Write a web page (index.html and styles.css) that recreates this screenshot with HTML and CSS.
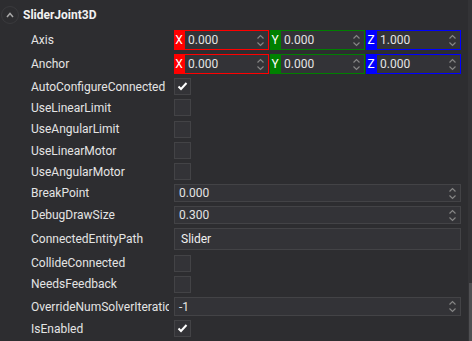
FILE: index.html
```html
<!DOCTYPE html>
<html lang="en">
  <head>
    <meta charset="UTF-8" />
    <title>SliderJoint3D</title>
    <link rel="stylesheet" href="styles.css">
  </head>
  <body>
    <div class="panel">
      <div class="content">
        <div class="header">
          <span class="collapse">
            <svg width="8" height="6" viewBox="0 0 8 6"><polyline points="1,5 4,1.5 7,5" fill="none" stroke="#a8a8a8" stroke-width="1.5"/></svg>
          </span>
          <span class="title">SliderJoint3D</span>
        </div>

        <div class="props">
          <div class="row">
            <div class="label">Axis</div>
            <div class="vector">
              <div class="axis x"><span class="tag">X</span><span class="num">0.000<i class="spin"></i></span></div>
              <div class="axis y"><span class="tag">Y</span><span class="num">0.000<i class="spin"></i></span></div>
              <div class="axis z"><span class="tag">Z</span><span class="num">1.000<i class="spin"></i></span></div>
            </div>
          </div>
          <div class="row">
            <div class="label">Anchor</div>
            <div class="vector">
              <div class="axis x"><span class="tag">X</span><span class="num">0.000<i class="spin"></i></span></div>
              <div class="axis y"><span class="tag">Y</span><span class="num">0.000<i class="spin"></i></span></div>
              <div class="axis z"><span class="tag">Z</span><span class="num">0.000<i class="spin"></i></span></div>
            </div>
          </div>
          <div class="row check-row">
            <div class="label">AutoConfigureConnected</div>
            <div><span class="checkbox checked"></span></div>
          </div>
          <div class="row check-row">
            <div class="label">UseLinearLimit</div>
            <div><span class="checkbox"></span></div>
          </div>
          <div class="row check-row">
            <div class="label">UseAngularLimit</div>
            <div><span class="checkbox"></span></div>
          </div>
          <div class="row check-row">
            <div class="label">UseLinearMotor</div>
            <div><span class="checkbox"></span></div>
          </div>
          <div class="row check-row">
            <div class="label">UseAngularMotor</div>
            <div><span class="checkbox"></span></div>
          </div>
          <div class="row">
            <div class="label">BreakPoint</div>
            <div class="field number">0.000<i class="spin"></i></div>
          </div>
          <div class="row">
            <div class="label">DebugDrawSize</div>
            <div class="field number">0.300<i class="spin"></i></div>
          </div>
          <div class="row">
            <div class="label">ConnectedEntityPath</div>
            <div class="field text">Slider</div>
          </div>
          <div class="row check-row">
            <div class="label">CollideConnected</div>
            <div><span class="checkbox"></span></div>
          </div>
          <div class="row check-row">
            <div class="label">NeedsFeedback</div>
            <div><span class="checkbox"></span></div>
          </div>
          <div class="row">
            <div class="label">OverrideNumSolverIterations</div>
            <div class="field number tall">-1<i class="spin"></i></div>
          </div>
          <div class="row check-row">
            <div class="label">IsEnabled</div>
            <div><span class="checkbox checked"></span></div>
          </div>
        </div>
      </div>
      <div class="scrollbar"><div class="thumb"></div></div>
    </div>
  </body>
</html>
```

FILE: styles.css
```css
body {
  margin: 0;
  background-color: #2d2d30;
  font-family: Roboto, "Liberation Sans", sans-serif;
  font-size: 12px;
  color: #e4e4e4;
  overflow: hidden;
}
.panel {
  display: flex;
  height: 341px;
}
.content {
  flex: 1;
}
.header {
  height: 28px;
  display: flex;
  align-items: center;
  padding-top: 2px;
  box-sizing: border-box;
}
.collapse {
  width: 18px;
  height: 18px;
  margin-left: 1px;
  border: 1px solid #3a3a3d;
  border-radius: 50%;
  display: flex;
  justify-content: center;
  align-items: center;
  box-sizing: border-box;
}
.collapse svg {
  margin-top: -1px;
}
.title {
  margin-left: 4px;
  font-weight: bold;
  color: #f2f2f2;
}
.row {
  display: grid;
  grid-template-columns: 174px 287px;
  align-items: center;
  padding: 2px 0;
}
.check-row {
  height: 21.3px;
  padding: 0;
}
.label {
  margin-right: 5px;
  padding-left: 31px;
  white-space: nowrap;
  overflow: hidden;
}
.vector {
  display: flex;
  gap: 1px;
  height: 20px;
}
.axis {
  flex: 1;
  display: flex;
}
.tag {
  width: 10px;
  display: flex;
  justify-content: center;
  align-items: center;
  color: #ffffff;
  font-size: 12px;
}
.num {
  flex: 1;
  position: relative;
  background: #333337;
  border: 1px solid;
  padding-left: 3px;
  display: flex;
  align-items: center;
}
.x .tag { background: #ff0000; }
.x .num { border-color: #ff0000; }
.y .tag { background: #008000; }
.y .num { border-color: #008000; }
.z .tag { background: #0000ff; }
.z .num { border-color: #0000ff; }
.spin {
  position: absolute;
  right: 4px;
  top: 50%;
  width: 7px;
  height: 13px;
  margin-top: -6.5px;
  background:
    url("data:image/svg+xml,%3Csvg xmlns='http://www.w3.org/2000/svg' width='7' height='13'%3E%3Cpolyline points='0.5,4.5 3.5,1.5 6.5,4.5' fill='none' stroke='%23858585' stroke-width='1.2'/%3E%3Cpolyline points='0.5,8.5 3.5,11.5 6.5,8.5' fill='none' stroke='%23858585' stroke-width='1.2'/%3E%3C/svg%3E") no-repeat;
}
.field {
  position: relative;
  background: #333337;
  border: 1px solid #434346;
  display: flex;
  align-items: center;
  box-sizing: border-box;
}
.number {
  height: 18px;
  padding-left: 4px;
}
.number.tall {
  height: 19px;
}
.text {
  height: 22px;
  padding-left: 6px;
  color: #f0f0f0;
}
.checkbox {
  display: block;
  width: 17px;
  height: 17px;
  box-sizing: border-box;
  background: #333337;
  border: 1px solid #434346;
}
.checkbox.checked {
  background:
    url("data:image/svg+xml,%3Csvg xmlns='http://www.w3.org/2000/svg' width='15' height='15'%3E%3Cpolyline points='3.5,7.5 6,10 11.5,4' fill='none' stroke='%23ffffff' stroke-width='2'/%3E%3C/svg%3E") no-repeat, #333337;
}
.scrollbar {
  width: 4px;
  background: #333336;
  display: flex;
  flex-direction: column;
  justify-content: flex-end;
}
.thumb {
  height: 58px;
  margin-left: 1px;
  background: #4f4f52;
}
```
